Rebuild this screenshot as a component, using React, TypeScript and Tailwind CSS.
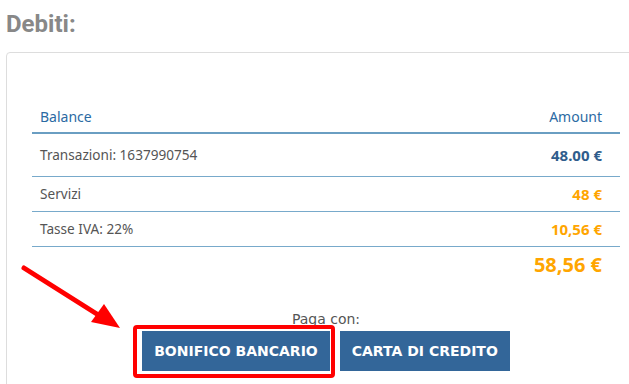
const rows = [
  { label: "Transazioni: 1637990754", value: "48.00 €", tone: "blue", h: "h-[43px]" },
  { label: "Servizi", value: "48 €", tone: "orange", h: "h-[35px]" },
  { label: "Tasse IVA: 22%", value: "10,56 €", tone: "orange", h: "h-[35px]" },
];

function Arrow() {
  return (
    <svg
      className="absolute left-0 top-0 pointer-events-none"
      width="629"
      height="384"
      viewBox="0 0 629 384"
    >
      <line x1="24" y1="268" x2="100" y2="316" stroke="#ff0000" strokeWidth="5" strokeLinecap="round" />
      <polygon points="120,328 91,322 104,304" fill="#ff0000" />
    </svg>
  );
}

export default function App() {
  return (
    <div className="relative h-[384px] w-[629px] overflow-hidden bg-white">
      <h2 className="pl-[6px] pt-[10px] text-[24px] leading-[28px] font-bold text-[#888888] [font-family:Roboto,sans-serif]">
        Debiti:
      </h2>

      <div className="ml-[6px] mt-[14px] w-[660px] rounded-[4px] border border-[#dddddd] pl-[25px] pt-[48px] pb-[40px] [font-family:'Noto_Sans',sans-serif]">
        <div className="w-[588px]">
          <div className="flex h-[33px] items-center justify-between border-b-2 border-b-[#6a9ec2] pl-[8px] pr-[18px] text-[14px] text-[#2b6aa3]">
            <span>Balance</span>
            <span>Amount</span>
          </div>
          {rows.map((r) => (
            <div
              key={r.label}
              className={`flex ${r.h} items-center justify-between border-b border-b-[#78aacb] pl-[8px] pr-[18px] text-[13.6px]`}
            >
              <span className="text-[#555555]">{r.label}</span>
              <span
                className={`text-[15px] font-bold ${
                  r.tone === "blue" ? "text-[#2f5d8c]" : "text-[#ffa500]"
                }`}
              >
                {r.value}
              </span>
            </div>
          ))}
          <div className="flex h-[36px] items-center justify-end pr-[18px]">
            <span className="text-[20px] font-bold text-[#ffa500]">58,56 €</span>
          </div>

          <div className="mt-[27px] flex flex-col items-center [font-family:'DejaVu_Sans',sans-serif]">
            <div className="text-[14px] leading-[18px] text-[#555555]">Paga con:</div>
            <div className="mt-[3px] flex gap-[10px]">
              <div className="relative">
                <button className="h-[40px] bg-[#336699] px-[12px] text-[14px] font-bold text-white">
                  BONIFICO BANCARIO
                </button>
                <span className="absolute -left-[9px] -top-[6px] -right-[5px] -bottom-[7px] rounded-[4px] border-[4px] border-[#ff0000]" />
              </div>
              <button className="h-[40px] bg-[#336699] px-[12px] text-[14px] font-bold text-white">
                CARTA DI CREDITO
              </button>
            </div>
          </div>
        </div>
      </div>

      <Arrow />
    </div>
  );
}
